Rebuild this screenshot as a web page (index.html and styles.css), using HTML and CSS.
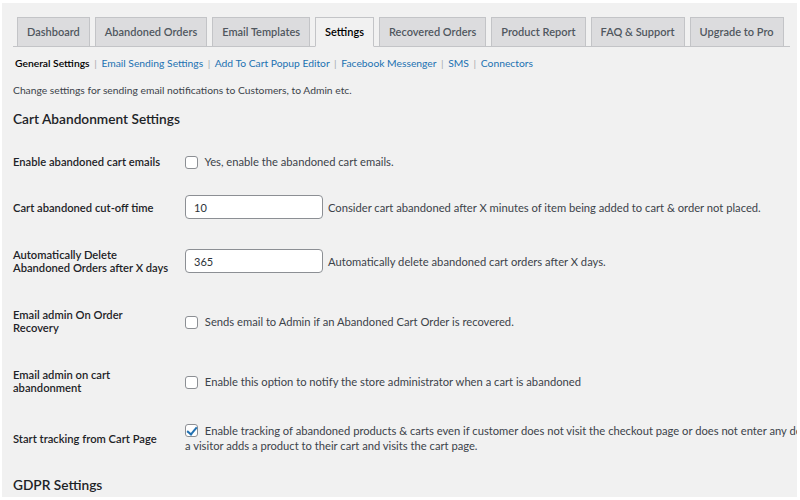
FILE: index.html
```html
<!DOCTYPE html>
<html lang="en">
<head>
<meta charset="utf-8">
<title>Settings</title>
<link rel="stylesheet" href="styles.css">
</head>
<body>
<div class="page">
  <nav class="tabs">
    <a class="tab">Dashboard</a>
    <a class="tab">Abandoned Orders</a>
    <a class="tab">Email Templates</a>
    <a class="tab active">Settings</a>
    <a class="tab">Recovered Orders</a>
    <a class="tab">Product Report</a>
    <a class="tab">FAQ &amp; Support</a>
    <a class="tab">Upgrade to Pro</a>
  </nav>

  <div class="subnav">
    <span class="current">General Settings</span> <span class="sep">|</span>
    <a>Email Sending Settings</a> <span class="sep">|</span>
    <a>Add To Cart Popup Editor</a> <span class="sep">|</span>
    <a>Facebook Messenger</a> <span class="sep">|</span>
    <a>SMS</a> <span class="sep">|</span>
    <a>Connectors</a>
  </div>

  <p class="intro">Change settings for sending email notifications to Customers, to Admin etc.</p>

  <h2 class="section-title">Cart Abandonment Settings</h2>

  <table class="form-table">
    <tr class="r1">
      <th>Enable abandoned cart emails</th>
      <td><label class="check"><input type="checkbox"> Yes, enable the abandoned cart emails.</label></td>
    </tr>
    <tr class="r2">
      <th>Cart abandoned cut-off time</th>
      <td><input class="text" type="text" value="10"><span class="desc">Consider cart abandoned after X minutes of item being added to cart &amp; order not placed.</span></td>
    </tr>
    <tr class="r3">
      <th>Automatically Delete Abandoned Orders after X days</th>
      <td><input class="text" type="text" value="365"><span class="desc">Automatically delete abandoned cart orders after X days.</span></td>
    </tr>
    <tr class="r4">
      <th>Email admin On Order Recovery</th>
      <td><label class="check"><input type="checkbox"> Sends email to Admin if an Abandoned Cart Order is recovered.</label></td>
    </tr>
    <tr class="r5">
      <th>Email admin on cart abandonment</th>
      <td><label class="check"><input type="checkbox"> Enable this option to notify the store administrator when a cart is abandoned</label></td>
    </tr>
    <tr class="r6">
      <th>Start tracking from Cart Page</th>
      <td><label class="check long"><input type="checkbox" checked> Enable tracking of abandoned products &amp; carts even if customer does not visit the checkout page or does not enter any details, i.e. when<br>a visitor adds a product to their cart and visits the cart page.</label></td>
    </tr>
  </table>

  <h2 class="section-title gdpr">GDPR Settings</h2>
</div>
</body>
</html>
```

FILE: styles.css
```css
html {
  background: #ffffff;
}

body {
  margin: 3px 3px 3px 2px;
  background: #f1f1f1;
  font-family: Lato, "Open Sans", sans-serif;
  font-size: 11px;
  color: #3c434a;
}

.page {
  height: 494px;
  overflow: hidden;
  padding-left: 11px;
  box-sizing: border-box;
}

/* tab strip */
.tabs {
  display: flex;
  gap: 5px;
  margin: 14px 7px 0 0;
  padding-left: 4px;
  border-bottom: 1px solid #c3c4c7;
  width: 773px;
}

.tab {
  display: block;
  height: 28px;
  line-height: 28px;
  padding: 0 9px;
  background: #dcdcde;
  border: 1px solid #c3c4c7;
  border-bottom: none;
  margin-bottom: -1px;
  font-weight: 600;
  font-size: 11px;
  color: #50575e;
  white-space: nowrap;
}

.tab.active {
  background: #f1f1f1;
  color: #000;
  border-bottom: 1px solid #f1f1f1;
  height: 28px;
}

/* sub navigation */
.subnav {
  margin-top: 9px;
  padding-left: 2px;
  font-size: 10.3px;
  line-height: 14px;
  white-space: nowrap;
}

.subnav .current {
  color: #000;
  font-weight: 600;
}

.subnav a {
  color: #2271b1;
}

.subnav .sep {
  color: #a7aaad;
  margin: 0 2px;
}

.intro {
  margin: 13px 0 0 0;
  font-size: 10.3px;
  line-height: 14px;
  color: #3c434a;
}

.section-title {
  margin: 12px 0 0 0;
  font-size: 13.7px;
  line-height: 20px;
  font-weight: 600;
  color: #1d2327;
}

/* settings table */
.form-table {
  border-collapse: collapse;
  margin-top: 9px;
  width: 1000px;
}

.form-table th {
  width: 157px;
  padding: 0 15px 0 0;
  text-align: left;
  vertical-align: middle;
  font-weight: 600;
  font-size: 11.2px;
  line-height: 13px;
  color: #1d2327;
}

.form-table td {
  padding: 0;
  vertical-align: middle;
  line-height: 15px;
  font-size: 11.2px;
  white-space: nowrap;
}

.r1 { height: 46px; }
.r2 { height: 46px; }
.r3 { height: 62px; }
.r4 { height: 58px; }
.r5 { height: 62px; }
.r6 { height: 52px; }

.check {
  display: inline-block;
}

.check input {
  appearance: none;
  -webkit-appearance: none;
  width: 13px;
  height: 13px;
  margin: 0 4px 0 0;
  border: 1px solid #8c8f94;
  border-radius: 3px;
  background: #fff;
  vertical-align: -3px;
  position: relative;
}

.check input:checked::before {
  content: "";
  position: absolute;
  left: 3px;
  top: 0px;
  width: 4px;
  height: 8px;
  border-right: 2px solid #2271b1;
  border-bottom: 2px solid #2271b1;
  transform: rotate(40deg);
}

.long input {
  vertical-align: -2px;
}

.text {
  width: 138px;
  height: 24px;
  box-sizing: border-box;
  padding: 0 8px;
  border: 1px solid #8c8f94;
  border-radius: 4px;
  background: #fff;
  font-family: inherit;
  font-size: 11px;
  color: #2c3338;
  vertical-align: middle;
}

.desc {
  margin-left: 5px;
  vertical-align: middle;
}

.gdpr {
  margin-top: 11px;
}
```
